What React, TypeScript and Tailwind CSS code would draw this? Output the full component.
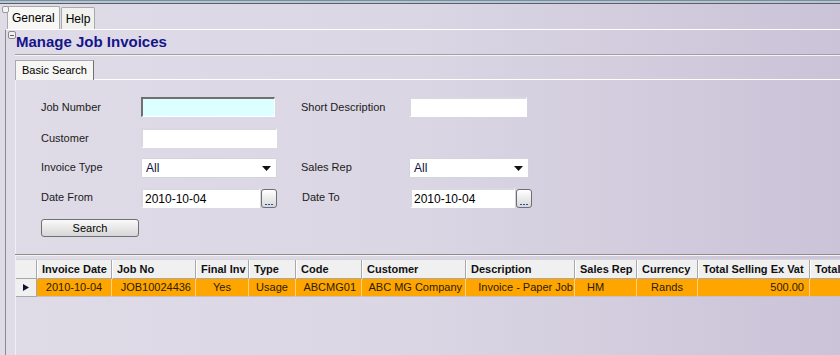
import React from 'react'

const COLS = [
  { label: 'Invoice Date', w: 75, value: '2010-10-04', align: 'text-center' },
  { label: 'Job No', w: 84, value: 'JOB10024436', align: 'text-right pr-[4px]' },
  { label: 'Final Inv', w: 53, value: 'Yes', align: 'text-center' },
  { label: 'Type', w: 47, value: 'Usage', align: 'text-center' },
  { label: 'Code', w: 66, value: 'ABCMG01', align: 'text-right pr-[5px]' },
  { label: 'Customer', w: 104, value: 'ABC MG Company', align: 'text-right pr-[3px]' },
  { label: 'Description', w: 109, value: 'Invoice - Paper Job', align: 'text-right pr-[1px]' },
  { label: 'Sales Rep', w: 62, value: 'HM', align: 'text-left pl-[12px]' },
  { label: 'Currency', w: 61, value: 'Rands', align: 'text-center' },
  { label: 'Total Selling Ex Vat', w: 112, value: '500.00', align: 'text-right pr-[5px]' },
  { label: 'Total Selling Inc Vat', w: 112, value: '570.00', align: 'text-right pr-[5px]' },
]

function TextBox({ w, value = '', cyan = false }: { w: number; value?: string; cyan?: boolean }) {
  return (
    <div
      className={`h-[20px] border-t-2 border-l-2 border-b border-r border-b-white border-r-white px-[2px] flex items-center text-[12px] text-black ${cyan ? 'bg-[#dcffff] border-t-[#707070] border-l-[#707070]' : 'bg-white border-t-[#d8d8e0] border-l-[#d8d8e0]'}`}
      style={{ width: w }}
    >
      {value}
    </div>
  )
}

function Select({ w }: { w: number }) {
  return (
    <div className="h-[20px] bg-white border border-[#d4d4dc] flex items-center justify-between pl-[4px] pr-[5px] text-[12px] text-[#101040]" style={{ width: w }}>
      <span>All</span>
      <svg width="9" height="5" viewBox="0 0 9 5"><polygon points="0,0 9,0 4.5,5" fill="#111" /></svg>
    </div>
  )
}

function DotButton() {
  return (
    <div className="w-[16px] h-[19px] ml-[1px] rounded-[3px] border border-[#6e6e6e] bg-gradient-to-b from-white to-[#d8d8d8] flex items-end justify-center pb-[2px]">
      <div className="flex gap-[1px]">
        <div className="w-[2px] h-[1px] bg-[#2050c0]" />
        <div className="w-[2px] h-[1px] bg-[#2050c0]" />
        <div className="w-[2px] h-[1px] bg-[#2050c0]" />
      </div>
    </div>
  )
}

export default function App() {
  return (
    <div
      className="w-[840px] h-[355px] overflow-hidden relative bg-gradient-to-r from-[#dfdbe7] via-[#dad6e4] to-[#cbc3d8] text-[11px] text-[#1a1a1a]"
      style={{ fontFamily: '"Liberation Sans", Arial, sans-serif' }}
    >
      {/* top frame */}
      <div className="h-[1px] bg-[#7d8da0]" />
      <div className="h-[2px] bg-[#b7c6d6]" />
      <div className="h-[1px] bg-[#5d6060]" />

      {/* page tabs */}
      <div className="h-[25px] flex items-end pl-[7px] relative">
        <div className="absolute left-[2px] top-[2px] w-[7px] h-[7px] rounded-[2px] border border-[#9a9a9a] bg-[#f4f4f4]" />
        <div className="h-[23px] px-[4px] bg-[#f7f7f5] border border-b-0 border-[#a9a9b0] rounded-t-[2px] flex items-center text-[12px] text-black">General</div>
        <div className="h-[22px] px-[4px] ml-[1px] bg-[#f1f1ee] border border-b-0 border-[#a9a9b0] rounded-t-[2px] flex items-center text-[12px] text-black">Help</div>
      </div>

      {/* main panel */}
      <div className="ml-[5px] border-l border-l-[#8a8a8a] border-t border-t-white h-[330px] relative">
        <div className="absolute left-[2px] top-[1px] w-[8px] h-[8px] rounded-[2px] border border-[#8a8a8a] bg-[#f0f0f0] flex items-center justify-center">
          <div className="w-[4px] h-[1px] bg-[#606060]" />
        </div>
        <div className="h-[24px] pl-[10px] flex items-center font-bold text-[15px] text-[#15158a]">Manage Job Invoices</div>
        <div className="ml-[9px] h-[1px] bg-[#a0a0a0]" />
        <div className="ml-[9px] h-[1px] bg-[#f4f4f8]" />

        {/* search tabs */}
        <div className="ml-[9px] mt-[4px] flex items-end">
          <div className="h-[20px] w-[79px] bg-[#f6f6f4] border border-b-0 border-[#a9a9b0] border-r-[#707070] flex items-center pl-[6px] text-[11px] text-black">Basic Search</div>
          <div className="flex-1 h-[1px] bg-white" />
        </div>

        {/* search form */}
        <div className="ml-[9px] border-l border-l-[#f0f0f4] h-[174px] pt-[17px] pl-[25px]">
          <div className="flex items-center h-[20px]">
            <div className="w-[100px]">Job Number</div>
            <TextBox w={134} cyan />
            <div className="w-[26px]" />
            <div className="w-[108px]">Short Description</div>
            <TextBox w={118} />
          </div>
          <div className="flex items-center h-[20px] mt-[11px]">
            <div className="w-[100px]">Customer</div>
            <TextBox w={136} />
          </div>
          <div className="flex items-center h-[20px] mt-[10px]">
            <div className="w-[100px] -mt-[2px]">Invoice Type</div>
            <Select w={136} />
            <div className="w-[24px]" />
            <div className="w-[108px] -mt-[2px]">Sales Rep</div>
            <Select w={120} />
          </div>
          <div className="flex items-center h-[20px] mt-[10px]">
            <div className="w-[100px] -mt-[2px]">Date From</div>
            <TextBox w={119} value="2010-10-04" />
            <DotButton />
            <div className="w-[25px]" />
            <div className="w-[108px] -mt-[2px]">Date To</div>
            <TextBox w={105} value="2010-10-04" />
            <DotButton />
          </div>
          <div className="mt-[11px] w-[98px] h-[18px] rounded-[3px] border border-[#707070] bg-gradient-to-b from-[#fafafa] to-[#d6d6d6] flex items-center justify-center text-[11px] text-black">
            Search
          </div>
        </div>

        {/* divider */}
        <div className="ml-[9px] h-[1px] bg-[#8c8c8c]" />
        <div className="ml-[9px] h-[1px] bg-[#f4f4f8]" />

        {/* results grid */}
        <div className="ml-[9px] border-l border-l-[#f0f0f4] h-[110px] pt-[3px]">
          <div className="flex w-[950px] h-[20px] border-t border-[#d4d4d4]">
            <div className="w-[21px] shrink-0 bg-[#f0f0f0] border-r border-b border-[#a8a8a8]" />
            {COLS.map((c) => (
              <div
                key={c.label}
                className="shrink-0 bg-[#f0f0f0] border-r border-b border-[#a8a8a8] border-l border-l-white flex items-center pl-[4px] font-bold text-[11px] text-[#111] whitespace-nowrap overflow-hidden"
                style={{ width: c.w }}
              >
                {c.label}
              </div>
            ))}
          </div>
          <div className="flex w-[950px] h-[18px]">
            <div className="w-[21px] shrink-0 bg-[#f0f0f0] border-r border-b border-[#a8a8a8] flex items-center justify-center">
              <svg width="6" height="7" viewBox="0 0 6 7"><polygon points="0,0 6,3.5 0,7" fill="#101030" /></svg>
            </div>
            {COLS.map((c) => (
              <div
                key={c.label}
                className={`shrink-0 bg-[#ffa500] border-r border-b border-[#ffd08a] border-b-[#c8c0c8] flex items-center text-[11px] text-[#2a1c00] whitespace-nowrap overflow-hidden ${c.align}`}
                style={{ width: c.w }}
              >
                <span className="w-full">{c.value}</span>
              </div>
            ))}
          </div>
        </div>
      </div>
    </div>
  )
}
